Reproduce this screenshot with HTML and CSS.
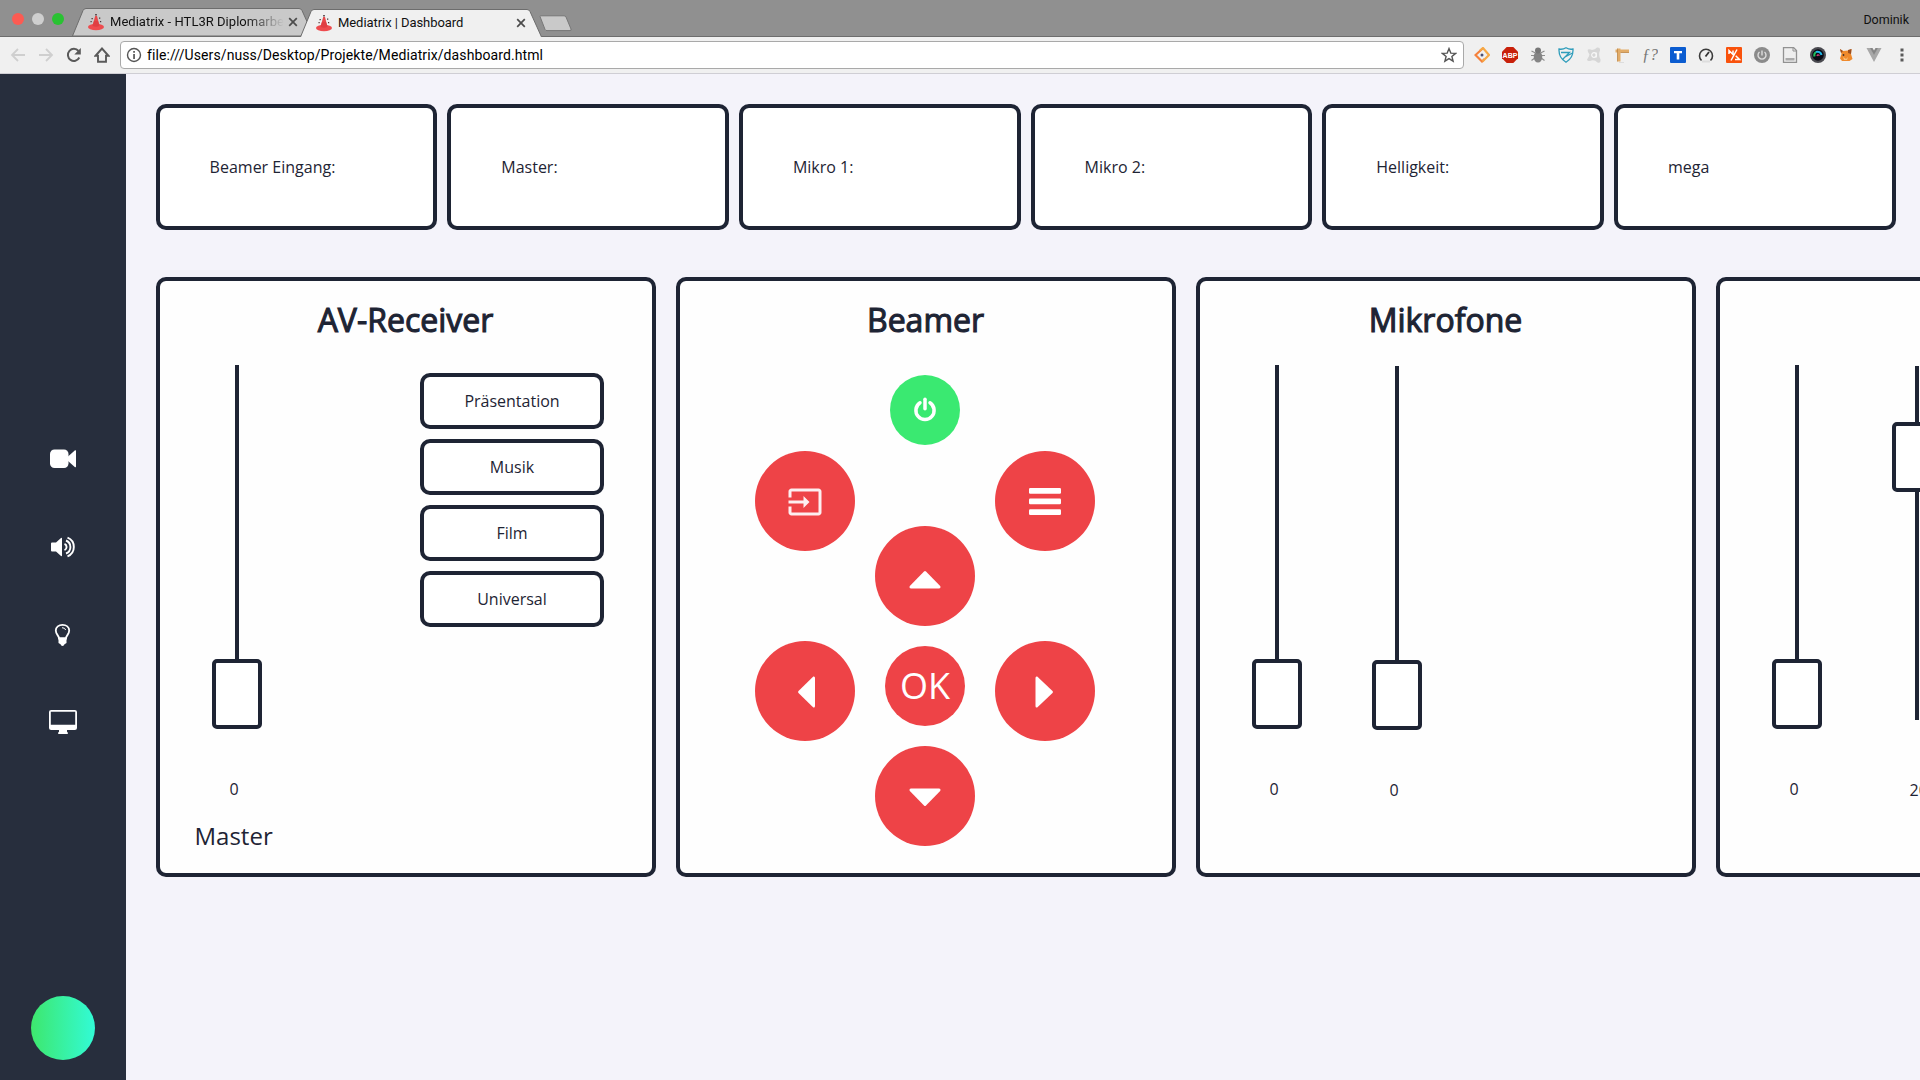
FILE: index.html
```html
<!DOCTYPE html>
<html lang="de">
<head>
<meta charset="utf-8">
<title>Mediatrix | Dashboard</title>
<link rel="stylesheet" href="styles.css">
</head>
<body>
<svg class="defs" width="0" height="0">
  <defs>
    <symbol id="cone" viewBox="0 0 16 18">
      <path d="M7.2 3h1.8l1 4 1.3 5H4.700l1.400-5z" fill="#e8484a"/>
      <ellipse cx="8" cy="14" rx="8" ry="3.300" fill="#ee4b4e"/>
      <path d="M4.500 13l1.500-5h4l1.500 5q-3.500 1.500-7 0z" fill="#e03e42"/>
      <path d="M7.200 1h1.600v1.600H7.200zM3.500 5h1.300v1.300H3.500zM11 4.500h1.300v1.300H11zM2.500 8h1.200v1.200H2.500zM12 8h1.200v1.200H12z" fill="#4a3438"/>
    </symbol>
    <symbol id="close" viewBox="0 0 10 10"><path d="M1.200 1.200l7.600 7.600M8.800 1.200L1.200 8.800" stroke="#4c4c4c" stroke-width="1.700"/></symbol>
  </defs>
</svg>

<header class="tabstrip">
  <div class="lights"><i class="light red"></i><i class="light grey"></i><i class="light green"></i></div>
  <div class="tab">
    <svg class="tab-shape" viewBox="0 0 242 28"><path d="M.5 28L11 2.500Q12 .5 14 .5H227Q229 .5 230 2.500L241.500 28z" fill="#c9c9c9" stroke="#6d6d6d"/></svg>
    <svg class="favicon"><use href="#cone"/></svg>
    <span class="tab-title faded">Mediatrix - HTL3R Diplomarbeit</span>
    <svg class="tab-close"><use href="#close"/></svg>
  </div>
  <div class="tab active">
    <svg class="tab-shape" viewBox="0 0 242 28"><path d="M.5 28L11 2.500Q12 .5 14 .5H227Q229 .5 230 2.500L241.500 28" fill="#f0f0f0" stroke="#6d6d6d"/></svg>
    <svg class="favicon"><use href="#cone"/></svg>
    <span class="tab-title">Mediatrix | Dashboard</span>
    <svg class="tab-close"><use href="#close"/></svg>
  </div>
  <svg class="newtab" viewBox="0 0 34 18"><path d="M1 1.500Q.8 .8 2 .8H25q1.500 0 2 1.200l5 12q.6 1.600-1 1.600H8q-1.500 0-2-1.200z" fill="#c9c9c9" stroke="#777"/></svg>
  <span class="profile">Dominik</span>
</header>

<nav class="toolbar">
  <div class="nav-buttons">
    <svg viewBox="0 0 16 16"><path d="M15 8H2M8 2L2 8l6 6" fill="none" stroke="#cfcfcf" stroke-width="1.800"/></svg>
    <svg viewBox="0 0 16 16"><path d="M1 8h13M8 2l6 6-6 6" fill="none" stroke="#cfcfcf" stroke-width="1.800"/></svg>
    <svg viewBox="0 0 16 16"><path d="M13.300 10.500A6 6 0 1 1 12.500 4" fill="none" stroke="#5a5a5a" stroke-width="2"/><path d="M14.800 1v6.500H8.300z" fill="#5a5a5a"/></svg>
    <svg viewBox="0 0 16 16"><path d="M8 1.500L1.500 8.800H4v6h8v-6h2.500z" fill="none" stroke="#5a5a5a" stroke-width="1.900"/></svg>
  </div>
  <div class="omnibox">
    <svg class="info" viewBox="0 0 16 16"><circle cx="8" cy="8" r="6.500" fill="none" stroke="#555" stroke-width="1.400"/><path d="M7.200 7h1.700v5H7.200zM7.200 4h1.700v1.700H7.200z" fill="#555"/></svg>
    <span class="url">file:///Users/nuss/Desktop/Projekte/Mediatrix/dashboard.html</span>
    <svg class="star" viewBox="0 0 16 16"><path d="M8 1.600l1.800 4.500 4.800.3-3.700 3.100 1.200 4.700L8 11.600l-4.100 2.600 1.200-4.700L1.400 6.400l4.800-.3z" fill="none" stroke="#555" stroke-width="1.400"/></svg>
  </div>
  <div class="extensions">
    <svg viewBox="0 0 16 16"><path d="M9 1.200L1.500 8 8 14.500l2.500-2.500" fill="none" stroke="#f5813c" stroke-width="2.200"/><path d="M6 3.500L9 1l6 7-6.500 6.500" fill="none" stroke="#f6a845" stroke-width="2.200"/><circle cx="8" cy="8" r="1.500" fill="#4b4f72"/></svg>
    <svg viewBox="0 0 16 16"><path d="M4.700 0h6.600L16 4.700v6.600L11.300 16H4.700L0 11.300V4.700z" fill="#c8200a"/><text x="8" y="10.800" text-anchor="middle" class="abp">ABP</text></svg>
    <svg viewBox="0 0 16 16"><path d="M1.500 4l4 2M14.500 4l-4 2M1 8.500h14M1.500 13.500l4-3M14.500 13.500l-4-3" stroke="#8f8f8f" stroke-width="1.200"/><ellipse cx="8" cy="10" rx="4.300" ry="5.500" fill="#858585"/><circle cx="8" cy="3.500" r="3" fill="#777"/></svg>
    <svg viewBox="0 0 16 16"><path d="M8 .8q3.500 2 7 1.200Q15.500 11 8 15.300 .5 11 1 2q3.500.8 7-1.200z" fill="none" stroke="#2f9dbb" stroke-width="1.300"/><path d="M3 5.500h8.500L4.500 12.500M14.500 6L7 10" fill="none" stroke="#2f9dbb" stroke-width="1.300"/></svg>
    <svg viewBox="0 0 16 16"><path d="M2 2.500Q4 2 6 3q3-.5 5-2.500 3.500-.5 3 3-2 4 .5 9 .5 4-3 3-3-3-6-2-4 1.500-4.500-1Q3 10 3.500 7.500 1 4 2 2.500z" fill="#d6d6d6"/><circle cx="8" cy="8" r="2.300" fill="none" stroke="#f8f8f8" stroke-width="1.200"/><path d="M10.300 5.500v5" stroke="#f8f8f8"/></svg>
    <svg viewBox="0 0 16 16"><path d="M1.500 2.500h2v-1h3v1h8.500v3H6.500v9h-3v-9h-2z" fill="#e2ac68"/><path d="M3.500 1.500v13M6.500 5.500h8.500" stroke="#bd8748" stroke-width=".8"/><path d="M5 15.500h5" stroke="#ddd"/></svg>
    <svg viewBox="0 0 16 16"><text x="0" y="13" class="fq">ƒ?</text></svg>
    <svg viewBox="0 0 16 16"><rect width="16" height="16" rx="1" fill="#0b5cd0"/><path d="M4 4h8v2.300H9.300V12.500H6.700V6.300H4z" fill="#fff"/></svg>
    <svg viewBox="0 0 16 16"><path d="M3.500 13.500A6.500 6.500 0 1 1 12.500 13.500" fill="none" stroke="#3b3b3b" stroke-width="1.600"/><path d="M7.500 9.500L11 5" stroke="#333" stroke-width="1.800"/><path d="M4 14.500h8" stroke="#ddd" stroke-width="2"/></svg>
    <svg viewBox="0 0 16 16"><rect width="16" height="16" rx="1" fill="#f9520c"/><path d="M11 2.500L5 13.500M3 7V3.500L7 7.500V3.500M9 12.500h4.500L9.700 8.800" fill="none" stroke="#fff" stroke-width="1.500"/></svg>
    <svg viewBox="0 0 16 16"><circle cx="8" cy="8" r="8" fill="#8b8b8b"/><path d="M5.500 5a4 4 0 1 0 5 0M8 3.500v5" fill="none" stroke="#ddd" stroke-width="1.400"/></svg>
    <svg viewBox="0 0 16 16"><path d="M1.500.5h10l3 3v12h-13z" fill="#eee" stroke="#929292" stroke-width="1.300"/><path d="M11 .5v3.500h3.500" fill="none" stroke="#929292"/><path d="M3.500 11h9v2.500h-9z" fill="#aaa"/></svg>
    <svg viewBox="0 0 16 16"><circle cx="8" cy="8" r="8" fill="#4a4a50"/><circle cx="8" cy="8" r="5.800" fill="#0a0a14"/><path d="M4.500 9.500a4 4 0 0 1 1.500-4.500" fill="none" stroke="#20c060" stroke-width="2"/><path d="M6 5a4 4 0 0 1 5.500 3" fill="none" stroke="#20b8e8" stroke-width="2"/><path d="M7 9q.5-2 2.500-.5" fill="none" stroke="#e04080" stroke-width="1.200"/></svg>
    <svg viewBox="0 0 16 16"><path d="M2 2l3 2 5-.5L13.500 2 13 7l1.500 5-3 2H4l-2-2.500L3.500 7z" fill="#ef8a2c"/><path d="M2 2l3 2-2 2zM10 3l3.500-1-.5 5-3-1z" fill="#9a4e20"/><path d="M5 10l3 2 2-2-1 3H6z" fill="#f7c07c"/><circle cx="5.500" cy="8" r=".9" fill="#40302a"/></svg>
    <svg viewBox="0 0 16 16"><path d="M.5 1h4L8 7.500 11.500 1h4L8 15z" fill="#a8a8a8"/><path d="M4 1h2.500L8 3.500 9.500 1H12L8 8z" fill="#858585"/></svg>
    <svg viewBox="0 0 16 16"><path d="M6.500 1.500h3v3h-3zM6.500 6.500h3v3h-3zM6.500 11.500h3v3h-3z" fill="#5a5a5a"/></svg>
  </div>
</nav>

<div class="page">
  <aside class="sidebar">
    <div class="menu">
      <svg viewBox="0 0 28 28"><rect x="1" y="4.500" width="18.500" height="18.500" rx="4.500"/><path d="M19 11.500l7-6.200q1-.5 1 .6v15.700q0 1-1 .6L19 16z"/></svg>
      <svg viewBox="0 0 28 28"><path d="M2 10.500q0-1 1-1h4l5-4.500q1-.7 1 .5v17q0 1-1 .5l-5-4.500H3q-1 0-1-1z"/><path d="M15.500 10.800a3.500 3.500 0 0 1 0 6.400M17 7.500a7 7 0 0 1 0 13M18.500 4.700a10 10 0 0 1 0 18.600" fill="none" stroke="#fff" stroke-width="1.900"/></svg>
      <svg viewBox="0 0 28 28"><path d="M10 17.500c0-3-3.200-4-3.200-8C6.800 6 9.800 3.800 13.500 3.800s6.700 2.200 6.700 5.700c0 4-3.200 5-3.200 8z" fill="none" stroke="#fff" stroke-width="1.800"/><path d="M13 6.700q3 0 3.700 2.300" fill="none" stroke="#fff"/><path d="M9.500 16.500h8v5.500l-2 1.200q-.5 1.800-2 1.800t-2-1.800L9.500 22z"/></svg>
      <svg viewBox="0 0 28 28"><path fill-rule="evenodd" d="M2.200 1h23.600Q28 1 28 3v16q0 2-2.200 2H18v1.800l.8.700V25H9.200v-1.500l.8-.7V21H2.200Q0 21 0 19V3q0-2 2.200-2zM1.800 2.800v13h24.400v-13z"/></svg>
    </div>
    <div class="status"></div>
  </aside>

  <main class="content">
    <section class="infos">
      <div class="info-card">Beamer Eingang:</div>
      <div class="info-card">Master:</div>
      <div class="info-card">Mikro 1:</div>
      <div class="info-card">Mikro 2:</div>
      <div class="info-card">Helligkeit:</div>
      <div class="info-card">mega</div>
    </section>

    <section class="panels">
      <article class="panel">
        <h2>AV-Receiver</h2>
        <div class="faders">
          <div class="fader">
            <div class="slider"><div class="thumb" style="margin-top:294px"></div></div>
            <span class="value">0</span>
            <span class="name">Master</span>
          </div>
          <div class="modes">
            <button>Präsentation</button>
            <button>Musik</button>
            <button>Film</button>
            <button>Universal</button>
          </div>
        </div>
      </article>

      <article class="panel">
        <h2>Beamer</h2>
        <div class="remote">
          <div class="remote-side">
            <button class="key"><svg class="nudge-input" width="36" height="36" viewBox="0 0 24 24"><path d="M21 3.010H3c-1.100 0-2 .9-2 2V9h2V4.990h18v14.030H3V15H1v4.010c0 1.100.9 1.980 2 1.980h18c1.100 0 2-.88 2-1.980v-14c0-1.110-.9-2-2-2zM11 16l4-4-4-4v3H1v2h10v3z" fill="#fdeef0"/></svg></button>
            <button class="key"><svg class="nudge-left-arrow" width="32" height="32" viewBox="0 0 32 32"><path d="M22.300 .5Q24 0 24 2v28q0 2-1.700 1.500L7.500 17q-1-1 0-2z"/></svg></button>
          </div>
          <div class="remote-middle">
            <button class="key power"><svg width="24" height="26" viewBox="0 0 24 26"><path d="M7 5.800a9.100 9.100 0 1 0 10 0" fill="none" stroke="#fff" stroke-width="3.500" stroke-linecap="round"/><path d="M12 2.200v9.500" stroke="#fff" stroke-width="3.500" stroke-linecap="round"/></svg></button>
            <button class="key"><svg class="nudge-down" width="32" height="32" viewBox="0 0 32 32"><path d="M.6 22.300L15 7.500q1-1 2 0l14.400 14.800Q32 24.500 30 24.500H2Q0 24.500 .6 22.300z"/></svg></button>
            <button class="key ok">OK</button>
            <button class="key"><svg class="nudge-input" width="32" height="32" viewBox="0 0 32 32"><path d="M.6 9.700L15 24.500q1 1 2 0L31.400 9.700Q32 7.500 30 7.500H2Q0 7.500 .6 9.700z"/></svg></button>
          </div>
          <div class="remote-side">
            <button class="key"><svg width="32" height="27" viewBox="0 0 32 27"><rect width="32" height="5.700" rx="1.200"/><rect y="10.600" width="32" height="5.700" rx="1.200"/><rect y="21.300" width="32" height="5.700" rx="1.200"/></svg></button>
            <button class="key"><svg class="nudge-input" width="32" height="32" viewBox="0 0 32 32"><path d="M8.200 .5Q6.500 0 6.500 2v28q0 2 1.700 1.500L23.500 17q1-1 0-2z"/></svg></button>
          </div>
        </div>
      </article>

      <article class="panel">
        <h2>Mikrofone</h2>
        <div class="faders">
          <div class="fader">
            <div class="slider"><div class="thumb" style="margin-top:294px"></div></div>
            <span class="value">0</span>
          </div>
          <div class="fader second">
            <div class="slider"><div class="thumb" style="margin-top:294px"></div></div>
            <span class="value">0</span>
          </div>
        </div>
      </article>

      <article class="panel">
        <h2></h2>
        <div class="faders">
          <div class="fader">
            <div class="slider"><div class="thumb" style="margin-top:294px"></div></div>
            <span class="value">0</span>
          </div>
          <div class="fader second">
            <div class="slider"><div class="thumb" style="margin-top:56px"></div></div>
            <span class="value">20</span>
          </div>
        </div>
      </article>
    </section>
  </main>
</div>
</body>
</html>
```
FILE: styles.css
```css
* { box-sizing: border-box; }

body {
  margin: 0;
  width: 1920px;
  height: 1080px;
  overflow: hidden;
  display: flex;
  flex-direction: column;
  background: #f4f3fa;
  color: #1e2434;
  font: 16px/22px "Open Sans", "Noto Sans", sans-serif;
}

.defs { position: absolute; }

button {
  margin: 0;
  padding: 0;
  font: inherit;
  color: inherit;
}

/* Browser window */
.tabstrip {
  flex: none;
  height: 37px;
  display: flex;
  align-items: flex-end;
  background: #909090;
  border-bottom: 1px solid #6d6d6d;
  font-family: Roboto, sans-serif;
  color: #111;
}

.lights {
  display: flex;
  gap: 8px;
  align-self: flex-start;
  padding: 13px 8px 0 12px;
}

.light { width: 12px; height: 12px; border-radius: 50%; }
.red { background: #fc5b52; }
.grey { background: #cfcfcf; }
.green { background: #29c232; }

.tab {
  position: relative;
  width: 242px;
  height: 28px;
  display: flex;
  align-items: center;
  padding: 0 16px;
}

.tab.active { margin: 0 -3px -1px -14px; }
.tab-shape { position: absolute; left: 0; top: 0; width: 242px; height: 28px; }
.favicon { position: relative; width: 16px; height: 18px; flex: none; }
.tab-title {
  position: relative;
  flex: 1;
  margin-left: 6px;
  overflow: hidden;
  white-space: nowrap;
  font-size: 13px;
  line-height: 20px;
  letter-spacing: -.06px;
}
.faded {
  letter-spacing: .03px;
  -webkit-mask-image: linear-gradient(90deg, #000 78%, transparent 100%);
  mask-image: linear-gradient(90deg, #000 78%, transparent 100%);
}
.tab-close { position: relative; width: 10px; height: 10px; margin-left: 4px; flex: none; }
.newtab { width: 34px; height: 18px; margin-bottom: 3px; }
.profile {
  margin-left: auto;
  padding-right: 11px;
  align-self: flex-start;
  padding-top: 10px;
  font-size: 12.500px;
  line-height: 20px;
}

.toolbar {
  flex: none;
  height: 37px;
  display: flex;
  align-items: center;
  background: #f0f0f0;
  border-bottom: 1px solid #cfced4;
}

.nav-buttons { display: flex; gap: 12px; padding: 0 10px; }
.nav-buttons svg, .extensions svg, .info, .star { width: 16px; height: 16px; flex: none; }

.omnibox {
  flex: 1;
  height: 28px;
  display: flex;
  align-items: center;
  padding: 0 6px 0 5px;
  background: #fff;
  border: 1px solid #a9a9a9;
  border-radius: 4px;
}

.url {
  flex: 1;
  margin-left: 5px;
  font: 14px/20px Roboto, sans-serif;
  letter-spacing: .1px;
  color: #000;
}

.extensions { display: flex; gap: 12px; padding: 0 10px; }
.abp { font: bold 7px "Liberation Sans", sans-serif; fill: #fff; }
.fq { font: italic 16px "Liberation Serif", serif; fill: #777; }

/* Application */
.page { flex: 1; display: flex; min-height: 0; }

.sidebar {
  flex: none;
  width: 126px;
  display: flex;
  flex-direction: column;
  align-items: center;
  justify-content: space-between;
  padding: 371px 0 20px;
  background: #272e3d;
}

.menu { display: flex; flex-direction: column; gap: 60px; }
.menu svg { width: 28px; height: 28px; fill: #fff; }

.status {
  width: 64px;
  height: 64px;
  border-radius: 50%;
  background: linear-gradient(90deg, #3ee76d, #32fbd6);
}

.content {
  flex: 1;
  min-width: 0;
  overflow: hidden;
  padding: 30px 24px 0 30px;
}

.infos {
  display: grid;
  grid-template-columns: repeat(6, 1fr);
  gap: 10px;
  margin: 0 .4px 0 -.4px;
}

.info-card {
  height: 126px;
  padding: 48px 50px;
  background: #fff;
  border: 4px solid #1e2434;
  border-radius: 10px;
}

.panels { display: flex; gap: 20px; margin-top: 47px; }

.panel {
  flex: none;
  width: 500px;
  height: 600px;
  padding-top: 17px;
  background: #fefefe;
  border: 4px solid #1e2434;
  border-radius: 10px;
}

.panel h2 {
  height: 44px;
  margin: 0 0 23px;
  padding-right: 1px;
  font-size: 32px;
  line-height: 44px;
  font-weight: 400;
  text-align: center;
  -webkit-text-stroke: 1.100px #1e2434;
}

.faders { display: flex; gap: 70px; padding-left: 52px; }
.fader { width: 50px; display: flex; flex-direction: column; }
.second { margin-top: 1px; }

.slider {
  height: 364px;
  display: flow-root;
  background: linear-gradient(#1e2434, #1e2434) 50% 0 / 4px 354px no-repeat;
}

.thumb {
  width: 50px;
  height: 70px;
  background: #fff;
  border: 4px solid #1e2434;
  border-radius: 5px;
}

.value { margin: 49px 0 0 17.500px; }
.name { margin: 19px 0 0 -17.500px; font-size: 24px; line-height: 33px; }

.modes {
  display: flex;
  flex-direction: column;
  gap: 10px;
  margin: 8px 0 0 88px;
}

.modes button {
  width: 184px;
  height: 56px;
  background: #fff;
  border: 4px solid #1e2434;
  border-radius: 10px;
}

.remote {
  display: flex;
  justify-content: center;
  gap: 20px;
  padding-top: 10px;
  margin-right: 2px;
}

.remote-side { display: flex; flex-direction: column; gap: 90px; padding-top: 76px; }
.remote-middle { display: flex; flex-direction: column; align-items: center; gap: 20px; }

.key {
  width: 100px;
  height: 100px;
  display: flex;
  align-items: center;
  justify-content: center;
  border: 0;
  border-radius: 50%;
  background: #ee4347;
  color: #fff;
}

.key svg { fill: #fff; }
.key.power { width: 70px; height: 70px; margin-bottom: 61px; background: #3ae971; }
.key.ok { width: 80px; height: 80px; padding-bottom: 2px; font-size: 36px; line-height: 49px; }
.nudge-down { margin-top: 8px; }
.nudge-input { margin-top: 2px; }
.nudge-left-arrow { margin: 2px 0 0 4px; }
```
